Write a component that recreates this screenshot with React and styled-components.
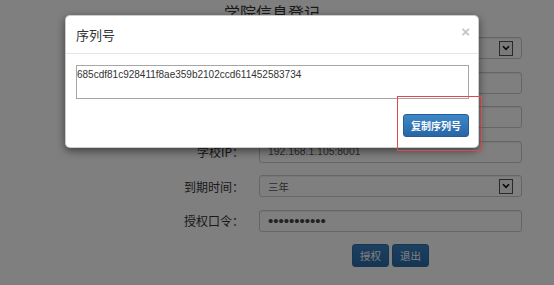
import React from 'react';
import styled, {createGlobalStyle} from 'styled-components';

const GlobalStyle = createGlobalStyle`
  html, body {
    margin: 0;
    padding: 0;
    background: #fff;
  }
  body {
    font-family: "Liberation Sans", "Noto Sans CJK SC", sans-serif;
    color: #333;
  }
`;

const Page = styled.div`
  position: relative;
  width: 554px;
  height: 285px;
  overflow: hidden;
`;

const Register = styled.div`
  width: 544px;
`;

const Title = styled.h3`
  margin: 0 0 15px;
  height: 22px;
  line-height: 22px;
  text-align: center;
  font: 400 16px "Noto Sans CJK SC", sans-serif;
  color: #333;
`;

const Form = styled.div`
  display: grid;
  grid-template-columns: 244px 263px;
  column-gap: 15px;
  row-gap: 12.6px;
`;

const Label = styled.label`
  display: flex;
  align-items: center;
  justify-content: flex-end;
  height: 22px;
  font: 400 12px "Noto Sans CJK SC", sans-serif;
  color: #333;
`;

const Field = styled.div`
  box-sizing: border-box;
  display: flex;
  align-items: center;
  justify-content: space-between;
  height: 22px;
  padding: 0 8px 0 8px;
  border: 1px solid #ccc;
  border-radius: 3px;
  background: #fff;
  box-shadow: inset 0 1px 1px rgba(0, 0, 0, .075);
  font-size: 10.4px;
  color: #555;
`;

const Password = styled.input`
  box-sizing: border-box;
  width: 100%;
  height: 22px;
  padding: 0 8px;
  border: 1px solid #ccc;
  border-radius: 3px;
  background: #fff;
  box-shadow: inset 0 1px 1px rgba(0, 0, 0, .075);
  font: 15px "Liberation Sans", sans-serif;
  color: #444;
  outline: none;
`;

const ArrowBox = styled.span`
  box-sizing: border-box;
  display: flex;
  align-items: center;
  justify-content: center;
  width: 14px;
  height: 15px;
  border: 1px solid #555;
  background: #f4f4f4;
`;

const ActionRow = styled.div`
  grid-column: 2;
  display: flex;
  justify-content: center;
  gap: 3px;
  margin-top: -1px;
`;

const FormButton = styled.button`
  width: 37px;
  height: 23px;
  padding: 0;
  border: 1px solid #2e6da4;
  border-radius: 3px;
  background: linear-gradient(#3a82c2, #2b6aa8);
  color: #fff;
  font: 400 10.5px "Noto Sans CJK SC", sans-serif;
`;

const Backdrop = styled.div`
  position: absolute;
  inset: 0;
  background: rgba(0, 0, 0, .5);
`;

const Modal = styled.div`
  position: absolute;
  left: 65px;
  top: 15px;
  width: 414px;
  box-sizing: border-box;
  background: #fff;
  border: 1px solid rgba(0, 0, 0, .2);
  border-radius: 5px;
  box-shadow: 0 3px 9px rgba(0, 0, 0, .5);
`;

const ModalHeader = styled.div`
  display: flex;
  align-items: center;
  justify-content: space-between;
  height: 37px;
  padding: 0 8px 0 10px;
  border-bottom: 1px solid #e5e5e5;
`;

const ModalTitle = styled.h4`
  margin: 0;
  font: 400 13px "Noto Sans CJK SC", sans-serif;
  color: #333;
`;

const Close = styled.span`
  margin-top: -6px;
  font: 700 15px "Liberation Sans", sans-serif;
  color: #c4c4c4;
  line-height: 1;
`;

const ModalBody = styled.div`
  padding: 11px 9px 10px 10px;
  display: flex;
  flex-direction: column;
`;

const Serial = styled.textarea`
  box-sizing: border-box;
  width: 393px;
  height: 34px;
  padding: 3px 0;
  border: 1px solid #a6a6a6;
  font: 10px/12px "Liberation Sans", sans-serif;
  color: #333;
  resize: none;
  outline: none;
`;

const CopyButton = styled.button`
  align-self: flex-end;
  margin-top: 15px;
  width: 66px;
  height: 23px;
  padding: 0;
  border: 1px solid #245e95;
  border-radius: 3px;
  background: linear-gradient(#3e88c8, #2866a4);
  color: #fff;
  font: 700 10px "Noto Sans CJK SC", sans-serif;
`;

const Annotation = styled.div`
  position: absolute;
  left: 397px;
  top: 96px;
  width: 85px;
  height: 55px;
  box-sizing: border-box;
  border: 1px solid #e0484f;
`;

const Chevron = () => (
    <svg width="8" height="6" viewBox="0 0 8 6">
        <path d="M1 1.2 L4 4.4 L7 1.2" fill="none" stroke="#111" strokeWidth="1.6" />
    </svg>
);

const rows = [
    {label: '所属地区：', select: true, value: ''},
    {label: '学校名称：', value: ''},
    {label: '学校编码：', value: ''},
    {label: '学校IP：', value: '192.168.1.105:8001'},
    {label: '到期时间：', select: true, value: '三年'},
];

export default function App() {
    return (
        <Page>
            <GlobalStyle />
            <Register>
                <Title>学院信息登记</Title>
                <Form>
                    {rows.map((row, index) => (
                        <React.Fragment key={index}>
                            <Label>{row.label}</Label>
                            <Field>
                                <span>{row.value}</span>
                                {row.select && <ArrowBox><Chevron /></ArrowBox>}
                            </Field>
                        </React.Fragment>
                    ))}
                    <Label>授权口令：</Label>
                    <Password type="password" value="12345678901" readOnly />
                    <ActionRow>
                        <FormButton>授权</FormButton>
                        <FormButton>退出</FormButton>
                    </ActionRow>
                </Form>
            </Register>
            <Backdrop />
            <Modal>
                <ModalHeader>
                    <ModalTitle>序列号</ModalTitle>
                    <Close>×</Close>
                </ModalHeader>
                <ModalBody>
                    <Serial readOnly value="685cdf81c928411f8ae359b2102ccd611452583734" />
                    <CopyButton>复制序列号</CopyButton>
                </ModalBody>
            </Modal>
            <Annotation />
        </Page>
    );
}
